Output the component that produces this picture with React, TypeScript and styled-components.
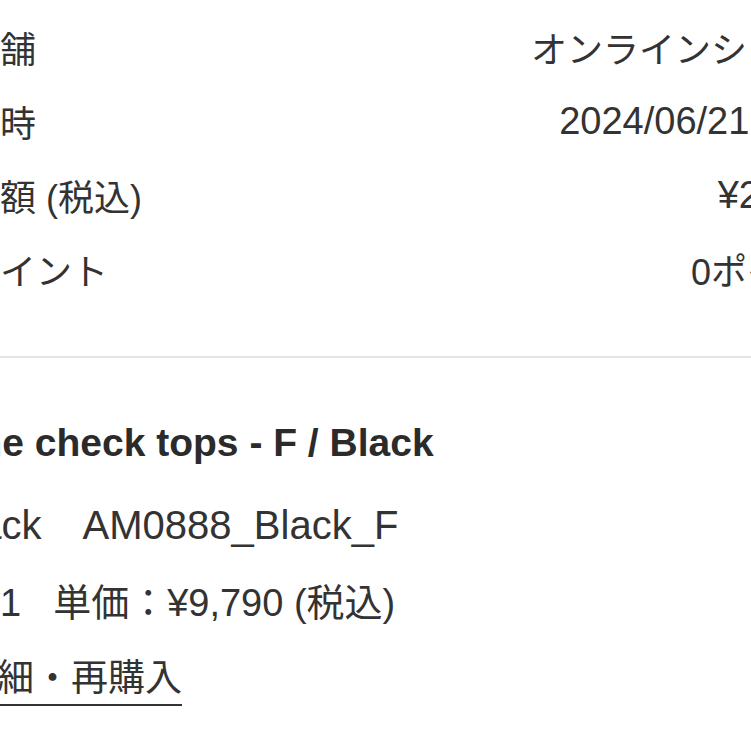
import styled, { createGlobalStyle } from "styled-components";

const GlobalStyle = createGlobalStyle`
  html, body {
    margin: 0;
    padding: 0;
    background: #fff;
    overflow: hidden;
  }
  body {
    font-family: "Liberation Sans", "Noto Sans CJK JP", sans-serif;
    color: #333;
  }
`;

const Viewport = styled.div`
  width: 751px;
  height: 751px;
  overflow: hidden;
`;

const Sheet = styled.div`
  width: 969px;
  margin-left: -114px;
`;

const Summary = styled.dl`
  margin: 0;
  padding: 10px 0 0 6px;
  display: flex;
  flex-direction: column;
`;

const Row = styled.div`
  height: 74px;
  display: flex;
  align-items: center;
  justify-content: space-between;
`;

const Label = styled.dt`
  margin: 0;
  font-size: 36px;
`;

const Value = styled.dd<{ $latin?: boolean }>`
  margin: 0;
  font-size: ${(p) => (p.$latin ? "38px" : "36px")};
`;

const Divider = styled.hr`
  margin: 50px 0 0;
  border: 0;
  height: 2px;
  background: #e4e4e4;
`;

const Item = styled.div`
  padding-top: 60px;
  display: flex;
  flex-direction: column;
  align-items: flex-start;
  gap: 28px;
  font-size: 38px;
`;

const ItemName = styled.h2`
  margin: 0 0 4px;
  font-size: 39px;
  font-weight: 700;
  line-height: 50px;
  color: #2b2b2b;
`;

const Meta = styled.div<{ $gap: number; $size?: number }>`
  display: flex;
  gap: ${(p) => p.$gap}px;
  font-size: ${(p) => p.$size ?? 38}px;
  line-height: 50px;
`;

const DetailLink = styled.a`
  display: inline-block;
  margin-top: -3px;
  font-size: 37px;
  line-height: 51px;
  color: #333;
  text-decoration: none;
  border-bottom: 2px solid #333;
`;

const App = () => {
  return (
    <Viewport>
      <GlobalStyle />
      <Sheet>
        <Summary>
          <Row>
            <Label>購入店舗</Label>
            <Value>オンラインショップ</Value>
          </Row>
          <Row>
            <Label>購入日時</Label>
            <Value $latin>2024/06/21 13:05</Value>
          </Row>
          <Row>
            <Label>合計金額 (税込)</Label>
            <Value $latin>¥20,570</Value>
          </Row>
          <Row>
            <Label>利用ポイント</Label>
            <Value>0ポイント</Value>
          </Row>
        </Summary>
        <Divider />
        <Item>
          <ItemName>Volume check tops - F / Black</ItemName>
          <Meta $gap={41} $size={40}>
            <span>F / Black</span>
            <span>AM0888_Black_F</span>
          </Meta>
          <Meta $gap={32}>
            <span>数量：1</span>
            <span>単価：¥9,790 (税込)</span>
          </Meta>
          <DetailLink href="#">商品詳細・再購入</DetailLink>
        </Item>
      </Sheet>
    </Viewport>
  );
};

export default App;
